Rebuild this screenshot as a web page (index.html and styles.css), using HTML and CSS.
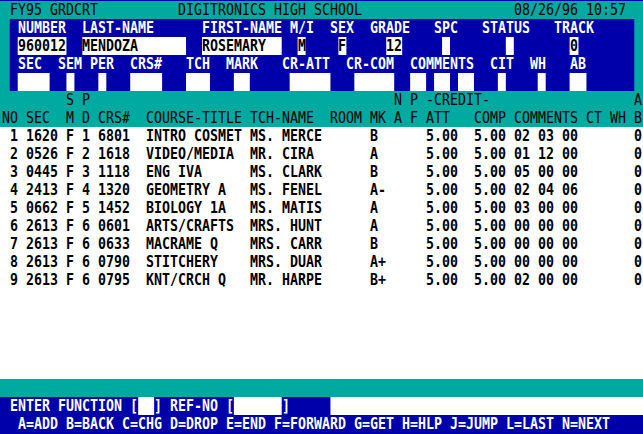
FILE: index.html
```html
<!DOCTYPE html>
<html>
<head>
<meta charset="utf-8">
<title>GRDCRT</title>
<link rel="stylesheet" href="styles.css">
</head>
<body>
<div class="screen">
<div class="line thin"> FY95 GRDCRT          DIGITRONICS HIGH SCHOOL                   08/26/96 10:57</div>
<div class="panel">
<div class="line"> NUMBER  LAST-NAME      FIRST-NAME M/I  SEX  GRADE   SPC   STATUS   TRACK</div>
<div class="line"> <span class="box">960012</span>  <span class="box">MENDOZA      </span>  <span class="box">ROSEMARY  </span>  <span class="box">M</span>    <span class="box">F</span>     <span class="box">12</span>     <span class="box"> </span>       <span class="box"> </span>       <span class="box">0</span></div>
<div class="line"> SEC  SEM PER  CRS#   TCH  MARK   CR-ATT  CR-COM  COMMENTS  CIT  WH   AB</div>
<div class="line"> <span class="box">    </span>  <span class="box"> </span>   <span class="box"> </span>   <span class="box">    </span>   <span class="box">   </span>   <span class="box">  </span>     <span class="box">     </span>   <span class="box">     </span>  <span class="box">  </span> <span class="box">  </span> <span class="box">  </span>   <span class="box"> </span>    <span class="box"> </span>   <span class="box">  </span></div>
</div>
<div class="line thin">        S P                                      N P -CREDIT-                  A</div>
<div class="line thin">NO SEC  M D CRS#  COURSE-TITLE TCH-NAME  ROOM MK A F ATT   COMP COMMENTS CT WH B</div>
<div class="data">
<div class="line"> 1 1620 F 1 6801  INTRO COSMET MS. MERCE      B      5.00  5.00 02 03 00       0</div>
<div class="line"> 2 0526 F 2 1618  VIDEO/MEDIA  MR. CIRA       A      5.00  5.00 01 12 00       0</div>
<div class="line"> 3 0445 F 3 1118  ENG IVA      MS. CLARK      B      5.00  5.00 05 00 00       0</div>
<div class="line"> 4 2413 F 4 1320  GEOMETRY A   MS. FENEL      A-     5.00  5.00 02 04 06       0</div>
<div class="line"> 5 0662 F 5 1452  BIOLOGY 1A   MS. MATIS      A      5.00  5.00 03 00 00       0</div>
<div class="line"> 6 2613 F 6 0601  ARTS/CRAFTS  MRS. HUNT      A      5.00  5.00 00 00 00       0</div>
<div class="line"> 7 2613 F 6 0633  MACRAME Q    MRS. CARR      B      5.00  5.00 00 00 00       0</div>
<div class="line"> 8 2613 F 6 0790  STITCHERY    MRS. DUAR      A+     5.00  5.00 00 00 00       0</div>
<div class="line"> 9 2613 F 6 0795  KNT/CRCH Q   MR. HARPE      B+     5.00  5.00 02 00 00       0</div>
</div>
<div class="line"></div>
<div class="line cmd"><span class="cmdbar"> ENTER FUNCTION [<span class="box">  </span>] REF-NO [<span class="box">      </span>]</span></div>
<div class="line keys">  A=ADD B=BACK C=CHG D=DROP E=END F=FORWARD G=GET H=HLP J=JUMP L=LAST N=NEXT</div>
</div>
</body>
</html>
```
FILE: styles.css
```css
html, body {
  margin: 0;
  padding: 0;
  background: #ffffff;
  overflow: hidden;
}

.screen {
  width: 725.6px;
  border-top: 1px solid #0000aa;
  background: #00aaa0;
  color: #000000;
  font-family: "DejaVu Sans Mono", monospace;
  font-size: 15px;
  line-height: 18px;
  font-weight: bold;
  transform: scaleX(0.88587);
  transform-origin: 0 0;
}

.line {
  height: 18px;
  padding-left: 2.26px;
  white-space: pre;
}

.thin {
  font-weight: normal;
  color: #000000;
}

.panel {
  background: #0000aa;
  color: #ffffff;
  width: 78ch;
  margin-left: calc(2.26px + 1ch);
}

.panel .line {
  padding-left: 0;
}

.box {
  display: inline-block;
  vertical-align: top;
  height: 18px;
  background: #ffffff;
  color: #000000;
}

.data {
  background: #ffffff;
  color: #000000;
  height: 252px;
}

.cmd {
  background: #ffffff;
  padding-left: 0;
  color: #ffffff;
}

.cmdbar {
  display: inline-block;
  vertical-align: top;
  height: 18px;
  width: 41ch;
  padding-left: 2.26px;
  background: #0000aa;
}

.keys {
  background: #0000aa;
  color: #ffffff;
  height: 19px;
}
```
